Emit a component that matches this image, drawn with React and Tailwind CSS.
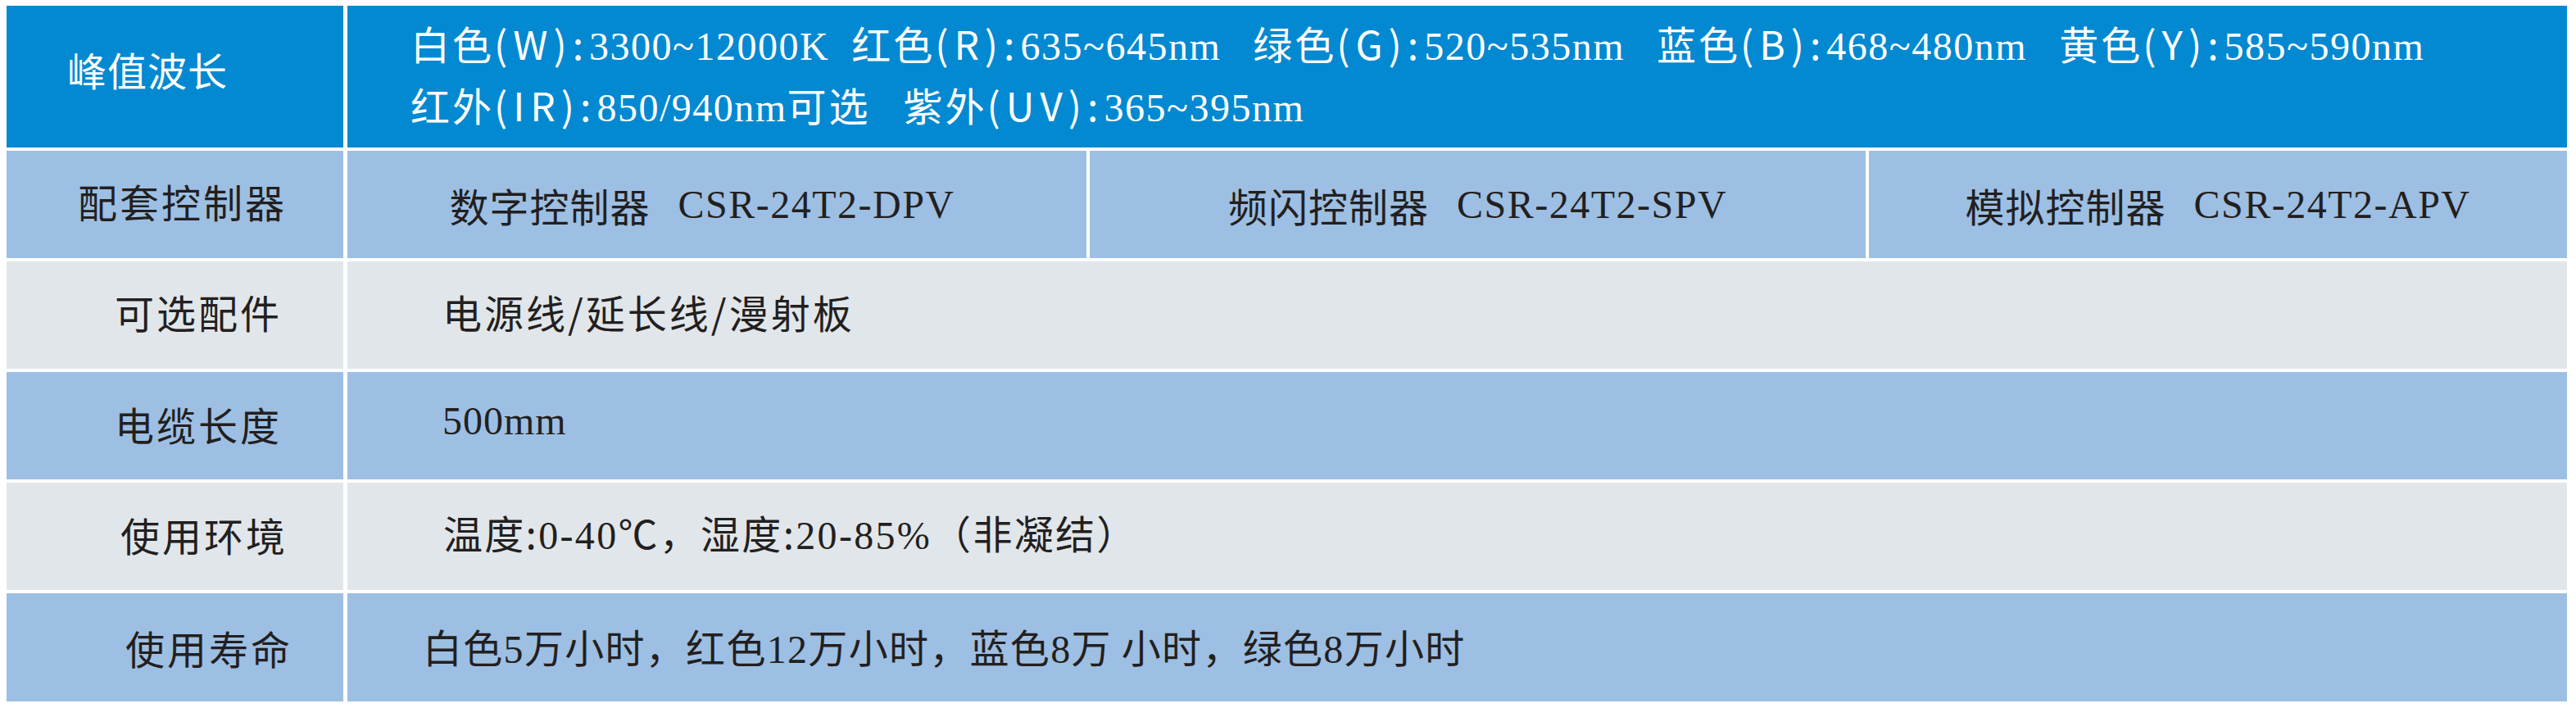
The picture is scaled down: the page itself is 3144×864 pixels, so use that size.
const CJK = "font-['Noto_Sans_CJK_SC',sans-serif]";
const SERIF = "font-['Liberation_Serif','Noto_Sans_CJK_SC',serif]";

const BLUE = 'bg-[#0389d1]';
const LIGHT = 'bg-[#9dbfe3]';
const GRAY = 'bg-[#e1e6ea]';

function Item({ label, code, value, className = '' }) {
  return (
    <span className={className}>
      <span className={`${CJK} tracking-[3px]`}>{label}</span>
      <span className={`${CJK} tracking-[7px]`}>({code}):</span>
      <span className={`${SERIF} tracking-[1.5px]`}>{value}</span>
    </span>
  );
}

function Label({ children, bg, pad, track = 'tracking-[3px]' }) {
  return (
    <div className={`w-[411px] shrink-0 flex items-center ${bg} ${pad}`}>
      <span className={`${CJK} ${track} text-[48px] leading-none text-[#231f20]`}>{children}</span>
    </div>
  );
}

function Controller({ name, model, width, pad = '' }) {
  return (
    <div className={`${width} ${LIGHT} ${pad} flex items-center justify-center text-[48px] text-[#231f20] whitespace-nowrap`}>
      <span className={`${CJK} tracking-[1px]`}>{name}</span>
      <span className={`${SERIF} tracking-[1.5px] ml-[34px]`}>{model}</span>
    </div>
  );
}

export default function App() {
  return (
    <div className="w-[3144px] h-[864px] bg-white pt-[7px] pl-[8px]">
      <div className="w-[3125px] flex flex-col gap-[4px]">
        {/* 峰值波长 */}
        <div className="h-[173px] flex gap-[5px]">
          <div className={`w-[411px] shrink-0 flex items-center ${BLUE} pl-[74px] pb-[20px]`}>
            <span className={`${CJK} tracking-[1px] text-[48px] leading-none text-white`}>峰值波长</span>
          </div>
          <div className={`flex-1 ${BLUE} flex flex-col justify-center pl-[77px] pb-[4px] text-white text-[48px] leading-[70px] whitespace-nowrap`}>
            <div>
              <Item label="白色" code="W" value="3300~12000K" />
              <Item className="ml-[27px]" label="红色" code="R" value="635~645nm" />
              <Item className="ml-[39px]" label="绿色" code="G" value="520~535nm" />
              <Item className="ml-[39px]" label="蓝色" code="B" value="468~480nm" />
              <Item className="ml-[39px]" label="黄色" code="Y" value="585~590nm" />
            </div>
            <div>
              <Item label="红外" code="IR" value="850/940nm" />
              <span className={`${CJK} tracking-[3px]`}>可选</span>
              <Item className="ml-[40px]" label="紫外" code="UV" value="365~395nm" />
            </div>
          </div>
        </div>

        {/* 配套控制器 */}
        <div className="h-[131px] flex gap-[5px]">
          <Label bg={LIGHT} pad="pl-[87px] pb-[10px]">配套控制器</Label>
          <div className="flex-1 flex gap-[4px]">
            <Controller name="数字控制器" model="CSR-24T2-DPV" width="w-[902px]" pad="pr-[36px]" />
            <Controller name="频闪控制器" model="CSR-24T2-SPV" width="w-[947px]" />
            <Controller name="模拟控制器" model="CSR-24T2-APV" width="flex-1" />
          </div>
        </div>

        {/* 可选配件 */}
        <div className="h-[131px] flex gap-[5px]">
          <Label bg={GRAY} pad="pl-[132px] pb-[10px]">可选配件</Label>
          <div className={`flex-1 ${GRAY} flex items-center pl-[116px] pb-[10px] text-[48px] text-[#231f20]`}>
            <span className={`${CJK} tracking-[3px]`}>电源线/延长线/漫射板</span>
          </div>
        </div>

        {/* 电缆长度 */}
        <div className="h-[131px] flex gap-[5px]">
          <Label bg={LIGHT} pad="pl-[132px] pb-[6px]">电缆长度</Label>
          <div className={`flex-1 ${LIGHT} flex items-center pl-[116px] pb-[12px] text-[48px] text-[#231f20]`}>
            <span className={`${SERIF} tracking-[1px]`}>500mm</span>
          </div>
        </div>

        {/* 使用环境 */}
        <div className="h-[131px] flex gap-[5px]">
          <Label bg={GRAY} pad="pl-[139px] pb-[6px]">使用环境</Label>
          <div className={`flex-1 ${GRAY} flex items-center pl-[117px] pb-[6px] text-[48px] text-[#231f20] whitespace-nowrap`}>
            <span className={`${SERIF} tracking-[2.3px]`}>
              <span className={CJK}>温度:</span>0-40℃<span className={CJK}>，湿度:</span>20-85%<span className={CJK}>（非凝结）</span>
            </span>
          </div>
        </div>

        {/* 使用寿命 */}
        <div className="h-[132px] flex gap-[5px]">
          <Label bg={LIGHT} pad="pl-[145px]">使用寿命</Label>
          <div className={`flex-1 ${LIGHT} flex items-center pl-[92px] text-[48px] text-[#231f20] whitespace-nowrap`}>
            <span className={`${SERIF} tracking-[1.3px]`}>
              <span className={CJK}>白色</span>5<span className={CJK}>万小时，红色</span>12<span className={CJK}>万小时，蓝色</span>8<span className={CJK}>万 小时，绿色</span>8<span className={CJK}>万小时</span>
            </span>
          </div>
        </div>
      </div>
    </div>
  );
}
